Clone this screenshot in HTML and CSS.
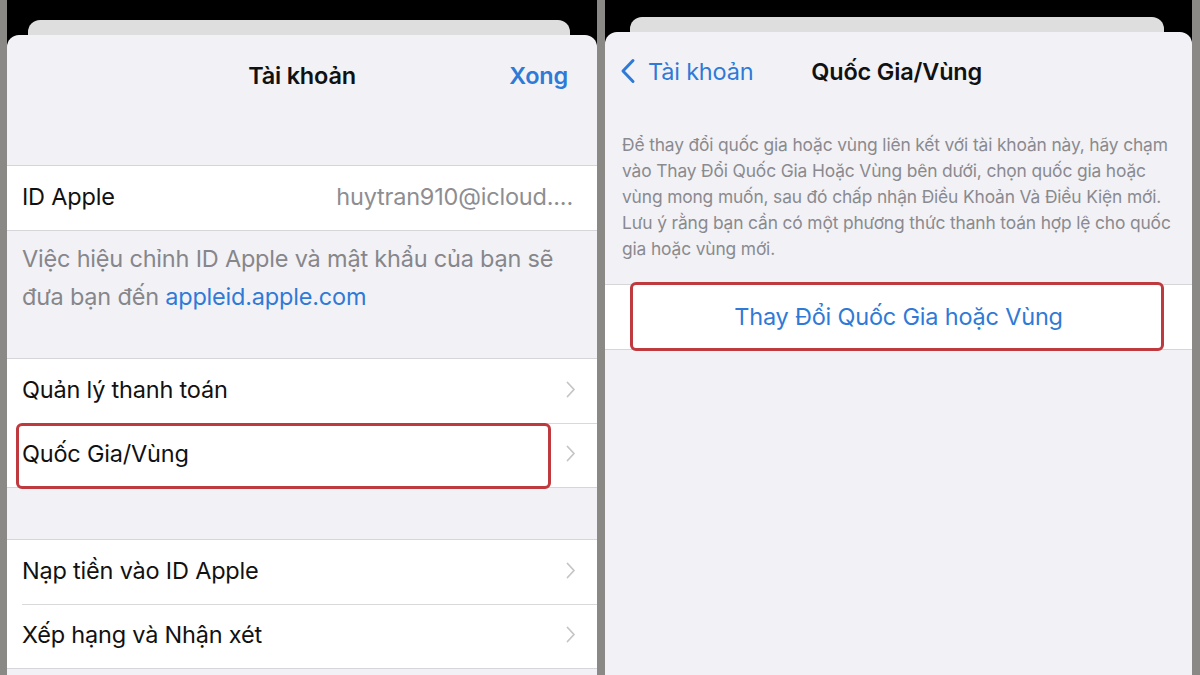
FILE: index.html
```html
<!DOCTYPE html>
<html lang="vi">
<head>
    <meta charset="UTF-8">
    <title>Quốc Gia/Vùng</title>
    <link rel="stylesheet" href="styles.css">
</head>
<body>
    <div class="frame">
        <!-- màn hình trái: Tài khoản -->
        <div class="screen screen-left">
            <div class="back-card"></div>
            <div class="sheet">
                <div class="nav">
                    <span class="nav-side"></span>
                    <span class="nav-title">Tài khoản</span>
                    <span class="nav-side nav-done">Xong</span>
                </div>

                <div class="group group-first">
                    <div class="row">
                        <span class="row-label">ID Apple</span>
                        <span class="row-value">huytran910@icloud....</span>
                    </div>
                </div>
                <p class="footer">Việc hiệu chỉnh ID Apple và mật khẩu của bạn sẽ đưa bạn đến <span class="link">appleid.apple.com</span></p>

                <div class="group group-second">
                    <div class="row">
                        <span class="row-label">Quản lý thanh toán</span>
                        <svg class="chevron" width="10" height="17" viewBox="0 0 10 17"><path d="M1.5 1.5 L8 8.5 L1.5 15.5" fill="none" stroke="#c5c5c9" stroke-width="1.8" stroke-linecap="round" stroke-linejoin="round"/></svg>
                    </div>
                    <div class="row row-marked">
                        <span class="row-label">Quốc Gia/Vùng</span>
                        <svg class="chevron" width="10" height="17" viewBox="0 0 10 17"><path d="M1.5 1.5 L8 8.5 L1.5 15.5" fill="none" stroke="#c5c5c9" stroke-width="1.8" stroke-linecap="round" stroke-linejoin="round"/></svg>
                        <div class="mark mark-left"></div>
                    </div>
                </div>

                <div class="group group-third">
                    <div class="row">
                        <span class="row-label">Nạp tiền vào ID Apple</span>
                        <svg class="chevron" width="10" height="17" viewBox="0 0 10 17"><path d="M1.5 1.5 L8 8.5 L1.5 15.5" fill="none" stroke="#c5c5c9" stroke-width="1.8" stroke-linecap="round" stroke-linejoin="round"/></svg>
                    </div>
                    <div class="row">
                        <span class="row-label">Xếp hạng và Nhận xét</span>
                        <svg class="chevron" width="10" height="17" viewBox="0 0 10 17"><path d="M1.5 1.5 L8 8.5 L1.5 15.5" fill="none" stroke="#c5c5c9" stroke-width="1.8" stroke-linecap="round" stroke-linejoin="round"/></svg>
                    </div>
                </div>
            </div>
        </div>

        <!-- màn hình phải: Quốc Gia/Vùng -->
        <div class="screen screen-right">
            <div class="back-card"></div>
            <div class="sheet">
                <div class="nav nav-right">
                    <span class="nav-back">
                        <svg width="16" height="26" viewBox="0 0 16 26"><path d="M13 2.5 L3 13 L13 23.5" fill="none" stroke="#2f7ad6" stroke-width="3" stroke-linecap="round" stroke-linejoin="round"/></svg>
                        Tài khoản
                    </span>
                    <span class="nav-title">Quốc Gia/Vùng</span>
                </div>
                <p class="desc">Để thay đổi quốc gia hoặc vùng liên kết với tài khoản này, hãy chạm vào Thay Đổi Quốc Gia Hoặc Vùng bên dưới, chọn quốc gia hoặc vùng mong muốn, sau đó chấp nhận Điều Khoản Và Điều Kiện mới. Lưu ý rằng bạn cần có một phương thức thanh toán hợp lệ cho quốc gia hoặc vùng mới.</p>
                <div class="group">
                    <div class="row row-action">
                        <span class="action">Thay Đổi Quốc Gia hoặc Vùng</span>
                        <div class="mark mark-right"></div>
                    </div>
                </div>
            </div>
        </div>
    </div>
</body>
</html>
```

FILE: styles.css
```css
* {
    margin: 0;
    padding: 0;
    box-sizing: border-box;
}

html,
body {
    width: 1200px;
    height: 675px;
    overflow: hidden;
}

body {
    background-color: #8b8986;
    font-family: Inter, "Noto Sans", sans-serif;
    color: #111111;
}

.frame {
    display: flex;
    gap: 8px;
    height: 675px;
    padding: 0 8px 0 7px;
}

.screen {
    background-color: #000000;
    display: flex;
    flex-direction: column;
    overflow: hidden;
}

.screen-left {
    width: 590px;
    padding-top: 20px;
}

.screen-right {
    width: 587px;
    padding-top: 17px;
}

.back-card {
    height: 30px;
    background-color: #dedede;
    border-radius: 12px 12px 0 0;
    margin: 0 27px 0 21px;
    flex-shrink: 0;
}

.screen-right .back-card {
    margin: 0 28px 0 25px;
}

.sheet {
    flex: 1;
    margin-top: -15px;
    background-color: #f2f2f6;
    border-radius: 12px 12px 0 0;
}

/* thanh điều hướng */
.nav {
    height: 80px;
    display: flex;
    align-items: center;
    justify-content: space-between;
    padding: 0 29px 0 29px;
}

.nav-side {
    width: 80px;
}

.nav-title {
    font-size: 23.5px;
    font-weight: 600;
    letter-spacing: -0.2px;
}

.nav-done {
    color: #2f7ad6;
    font-size: 23.5px;
    font-weight: 600;
    text-align: right;
    letter-spacing: -0.2px;
}

.nav-right {
    height: 78px;
    justify-content: flex-start;
    padding: 0 15px;
}

.nav-right .nav-title {
    margin-left: 58px;
}

.nav-back {
    display: flex;
    align-items: center;
    gap: 12px;
    color: #2f7ad6;
    font-size: 23.5px;
    letter-spacing: -0.2px;
}

/* nhóm ô */
.group {
    background-color: #ffffff;
    border-top: 1px solid #d6d6da;
    border-bottom: 1px solid #d6d6da;
}

.group-first {
    margin-top: 50px;
}

.group-second {
    margin-top: 42px;
}

.group-third {
    margin-top: 51px;
}

.row {
    position: relative;
    height: 64px;
    display: flex;
    align-items: center;
    justify-content: space-between;
    margin-left: 15px;
    padding: 0 21px 4px 0;
    font-size: 23.5px;
    letter-spacing: -0.2px;
}

.row + .row {
    border-top: 1px solid #d9d9dc;
}

.row-value {
    color: #8d8d92;
    padding-right: 3px;
}

.footer {
    padding: 9px 40px 0 15px;
    font-size: 23.5px;
    line-height: 38px;
    color: #86868b;
    letter-spacing: -0.2px;
}

.link {
    color: #2f7ad6;
}

.desc {
    padding: 22px 14px 22px 17px;
    font-size: 17.4px;
    line-height: 26px;
    color: #8a8a8f;
    letter-spacing: -0.15px;
}

.row-action {
    height: 64px;
    margin-left: 0;
    padding: 0 0 2px 0;
    justify-content: center;
}

.action {
    color: #2f7ad6;
    font-size: 23.5px;
    letter-spacing: -0.2px;
}

/* khung đánh dấu đỏ */
.mark {
    position: absolute;
    border: 3px solid #bf3a3f;
    border-radius: 6px;
}

.mark-left {
    left: -6px;
    right: 46px;
    top: -1px;
    bottom: -2px;
}

.mark-right {
    left: 25px;
    right: 28px;
    top: -3px;
    bottom: -2px;
}
```
